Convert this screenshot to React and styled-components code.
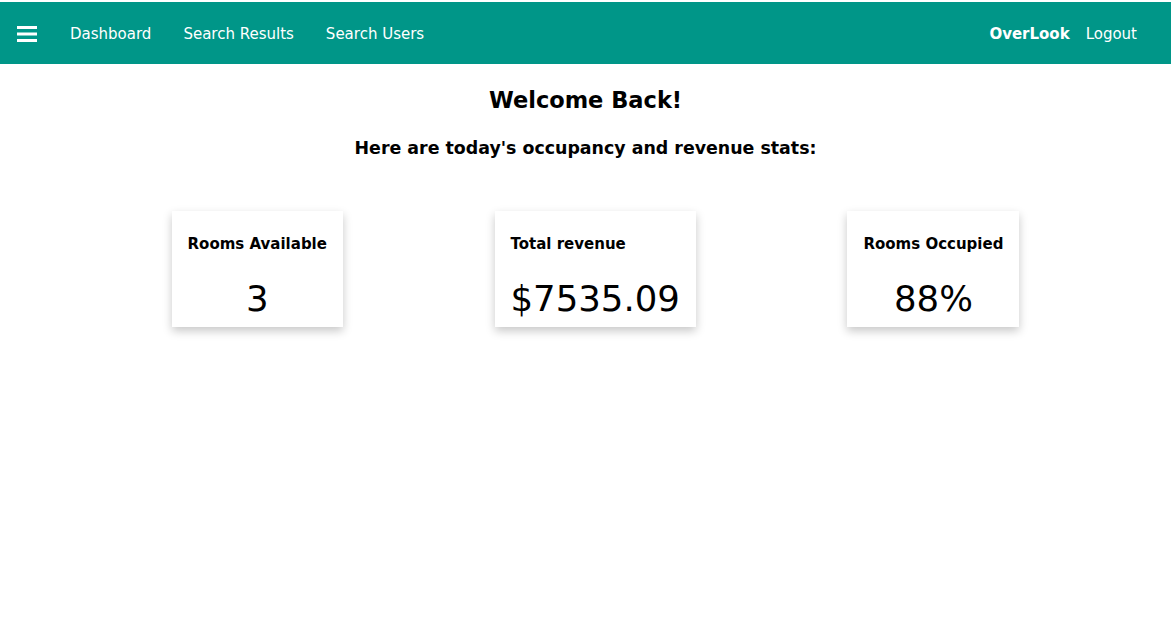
import React from "react";
import styled, { createGlobalStyle } from "styled-components";

const STATS = [
  { title: "Rooms Available", value: "3" },
  { title: "Total revenue", value: "$7535.09" },
  { title: "Rooms Occupied", value: "88%" },
];

const GlobalStyle = createGlobalStyle`
  html, body {
    margin: 0;
    padding: 0;
    background: #fff;
    font-family: "DejaVu Sans", Verdana, sans-serif;
  }
`;

const App = () => {
  return (
    <>
      <GlobalStyle />
      <Page>
        <NavBar>
          <NavLeft>
            <MenuButton aria-label="menu">
              <svg width="20" height="18" viewBox="0 0 20 18">
                <rect x="0" y="1" width="20" height="3" fill="#fff" />
                <rect x="0" y="7.5" width="20" height="3" fill="#fff" />
                <rect x="0" y="14" width="20" height="3" fill="#fff" />
              </svg>
            </MenuButton>
            <NavLink>Dashboard</NavLink>
            <NavLink>Search Results</NavLink>
            <NavLink>Search Users</NavLink>
          </NavLeft>
          <NavRight>
            <Brand>OverLook</Brand>
            <NavLink>Logout</NavLink>
          </NavRight>
        </NavBar>
        <Main>
          <Title>Welcome Back!</Title>
          <Subtitle>Here are today's occupancy and revenue stats:</Subtitle>
          <Cards>
            {STATS.map((stat) => (
              <Card key={stat.title}>
                <CardTitle>{stat.title}</CardTitle>
                <CardValue>{stat.value}</CardValue>
              </Card>
            ))}
          </Cards>
        </Main>
      </Page>
    </>
  );
};

const Page = styled.div`
  padding-top: 2px;
  min-height: 100vh;
  box-sizing: border-box;
`;

const NavBar = styled.nav`
  height: 62px;
  box-sizing: border-box;
  background-color: #009688;
  color: #fff;
  display: flex;
  align-items: center;
  justify-content: space-between;
  padding: 2px 34px 0 17px;
`;

const NavLeft = styled.div`
  display: flex;
  align-items: center;
  gap: 32px;
`;

const NavRight = styled.div`
  display: flex;
  align-items: center;
  gap: 16px;
`;

const MenuButton = styled.span`
  display: flex;
  width: 20px;
  height: 18px;
  margin-right: 1px;
`;

const NavLink = styled.a`
  font-size: 15px;
  color: #fff;
  cursor: pointer;
`;

const Brand = styled.span`
  font-size: 15px;
  font-weight: bold;
`;

const Main = styled.main`
  text-align: center;
`;

const Title = styled.h1`
  font-size: 22.5px;
  margin: 23px 0 0;
`;

const Subtitle = styled.h2`
  font-size: 17.4px;
  margin: 25px 0 0;
`;

const Cards = styled.div`
  display: flex;
  justify-content: space-evenly;
  align-items: flex-start;
  padding-left: 20px;
  margin-top: 53px;
`;

const Card = styled.div`
  background: #fff;
  padding: 24px 16px 7px;
  box-shadow: 0 4px 9px rgba(0, 0, 0, 0.22);
`;

const CardTitle = styled.h3`
  font-size: 15px;
  line-height: 18px;
  text-align: left;
  margin: 0;
`;

const CardValue = styled.p`
  font-size: 35.5px;
  line-height: 42px;
  margin: 25px 0 0;
`;

export default App;
